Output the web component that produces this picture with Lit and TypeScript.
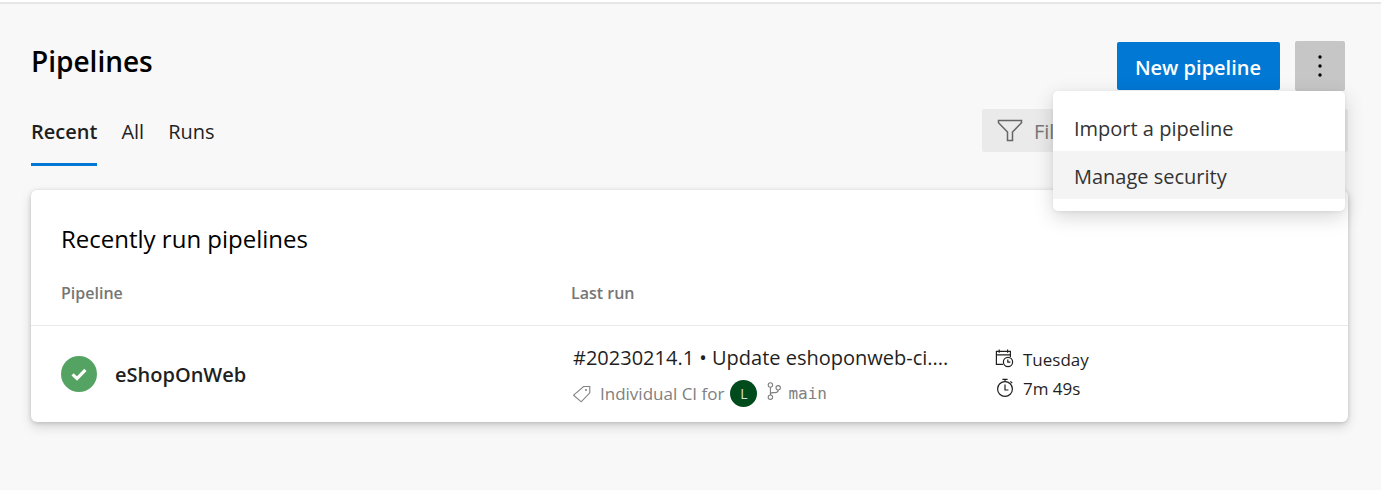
import { LitElement, html, css, svg } from "lit";
import { customElement, state } from "lit/decorators.js";

const checkIcon = html`<svg class="status" viewBox="0 0 36 36" role="img" aria-label="Success">
  <circle cx="18" cy="18" r="18" fill="#55a362" />
  <path d="M11.6 18.4l4.4 4.2 8.4-8.8" fill="none" stroke="#fff" stroke-width="3.2" />
</svg>`;

const line = (size: number, body: unknown) => html`<svg
  width=${size}
  height=${size}
  viewBox="0 0 ${size} ${size}"
  fill="none"
  stroke="currentColor"
  aria-hidden="true"
>${body}</svg>`;

const funnelIcon = line(26, svg`<path d="M1.5 2.5h23v2.2l-9 9.3v8.5h-5V14l-9-9.3z" stroke-width="1.5" />`);

const tagIcon = line(18, svg`
  <path d="M10.6 1.5h6.2v6.3l-8.6 9-7.6-6.6z" stroke-width="1.1" />
  <circle cx="13" cy="5" r="1" fill="currentColor" stroke="none" />`);

const branchIcon = line(18, svg`
  <g stroke-width="1.1">
    <circle cx="5.4" cy="3" r="2.2" />
    <circle cx="5.4" cy="15.2" r="2.2" />
    <circle cx="13.2" cy="5.8" r="2.2" />
    <path d="M5.4 5.2V13M13.2 8c0 2-1.2 2.6-3 2.6H7.6c-1.2 0-2.2.6-2.2 2.2" />
  </g>`);

const calendarIcon = line(20, svg`
  <g stroke-width="1.2">
    <path d="M8 15.4H1.4V2.4h14V8M1.4 5.8h14M4.2.4v3.4M12.6.4v3.4" />
    <circle cx="13" cy="13" r="4.6" />
    <path d="M12.8 10.4v2.8h2.6" />
  </g>`);

const timerIcon = line(20, svg`
  <g stroke-width="1.2">
    <circle cx="10" cy="11" r="7.4" />
    <path d="M10 6.6V12h3.4M7.4 1.4h5.2M10 1.4v2.2M15.4 3.4l1.8 1.8" />
  </g>`);

@customElement("app-root")
export class AppRoot extends LitElement {
  @state() private menuOpen = true;
  @state() private tab = "Recent";

  private tabs = ["Recent", "All", "Runs"];

  static styles = css`
    :host {
      display: block;
      min-height: 100vh;
      box-sizing: border-box;
      border-top: 2px solid #fff;
      background: #f8f8f8;
      color: #1f1f1f;
      font-family: "Segoe UI", "Open Sans", "Noto Sans", sans-serif;
      font-size: 20px;
      line-height: 28px;
    }
    * {
      box-sizing: border-box;
    }
    button,
    input {
      font: inherit;
      color: inherit;
      border: 0;
      margin: 0;
    }
    button {
      cursor: pointer;
    }
    a {
      color: inherit;
      text-decoration: none;
    }
    svg {
      display: block;
      flex: none;
    }
    .page {
      border-top: 2px solid #e6e6e6;
      padding: 37px 33px 68px 31px;
    }
    .header {
      display: flex;
      justify-content: space-between;
      padding-right: 3px;
    }
    h1 {
      margin: 0;
      color: #000;
      font-size: 28px;
      font-weight: 600;
      line-height: 40px;
    }
    .actions {
      display: flex;
      align-items: center;
      gap: 15px;
    }
    .primary {
      height: 48px;
      padding: 3px 19px 0 18px;
      border-radius: 2px;
      background: #0078d4;
      color: #fff;
      font-weight: 600;
    }
    .more {
      position: relative;
    }
    .dots {
      display: grid;
      place-items: center;
      width: 50px;
      height: 50px;
      padding: 0;
      border-radius: 2px;
      background: #c6c6c6;
      color: #000;
    }
    .menu {
      position: absolute;
      z-index: 1;
      top: 100%;
      right: 0;
      width: 292px;
      padding: 12px 0;
      border-radius: 5px;
      background: #fff;
      box-shadow: 0 6px 20px rgba(0, 0, 0, 0.16), 0 1px 4px rgba(0, 0, 0, 0.06);
    }
    .item {
      display: block;
      width: 100%;
      height: 48px;
      padding: 4px 21px 0;
      background: none;
      color: #333;
      text-align: left;
    }
    .item.active,
    .item:hover {
      background: #f4f4f4;
    }
    .bar {
      display: flex;
      align-items: flex-start;
      justify-content: space-between;
      margin-top: 18px;
    }
    .tabs {
      display: flex;
      gap: 24px;
    }
    .tab {
      height: 57px;
      padding: 0 0 9px;
      border-bottom: 3px solid transparent;
      background: none;
    }
    .tab.selected {
      border-color: #0078d4;
      font-weight: 600;
    }
    .filter {
      display: flex;
      align-items: center;
      gap: 11px;
      width: 366px;
      height: 43px;
      padding: 0 15px;
      border-radius: 2px;
      background: #eaeaea;
      color: #666;
    }
    .filter input {
      flex: 1;
      min-width: 0;
      padding: 2px 0 0;
      background: none;
    }
    .filter input::placeholder {
      color: #767676;
      opacity: 1;
    }
    .card {
      margin-top: 24px;
      border-radius: 6px;
      background: #fff;
      box-shadow: 0 5px 12px rgba(0, 0, 0, 0.14), 0 1px 4px rgba(0, 0, 0, 0.16);
    }
    h2 {
      margin: 0;
      padding: 32px 30px 0;
      color: #000;
      font-size: 24px;
      font-weight: 400;
      line-height: 34px;
    }
    table {
      width: 100%;
      border-collapse: collapse;
      table-layout: fixed;
    }
    .c1 {
      width: 540px;
    }
    .c2 {
      width: 424px;
    }
    th {
      height: 69px;
      padding: 6px 0 0;
      border-bottom: 1px solid #eaeaea;
      color: #767676;
      font-size: 16px;
      font-weight: 600;
      text-align: left;
    }
    td {
      height: 97px;
      padding: 0;
    }
    td.last-run {
      padding: 4px 0 0 2px;
    }
    th:first-child,
    td:first-child {
      padding-left: 30px;
    }
    .name {
      display: flex;
      align-items: center;
      gap: 18px;
      font-weight: 600;
    }
    .name span {
      padding-top: 3px;
    }
    .status {
      width: 36px;
      height: 36px;
    }
    .run {
      display: block;
      white-space: nowrap;
    }
    .detail {
      display: flex;
      align-items: center;
      margin-top: 8px;
      color: #808080;
      font-size: 17px;
    }
    .detail svg {
      margin-right: 9px;
    }
    .avatar {
      width: 27px;
      height: 27px;
      margin: 0 8px 0 6px;
      border-radius: 50%;
      background: #004b1c;
      color: #d6e4da;
      font-size: 14px;
      line-height: 27px;
      text-align: center;
    }
    .detail .branch {
      display: flex;
      align-items: center;
    }
    .detail .branch svg {
      margin: 0 5px 6px 0;
    }
    .mono {
      font-family: Consolas, "DejaVu Sans Mono", monospace;
      font-size: 16px;
    }
    .meta {
      display: flex;
      align-items: center;
      gap: 8px;
      font-size: 17px;
      line-height: 29px;
    }
  `;

  render() {
    return html`
      <main class="page">
        <header class="header">
          <h1>Pipelines</h1>
          <div class="actions">
            <button class="primary">New pipeline</button>
            <div class="more">
              <button
                class="dots"
                aria-label="More actions"
                aria-haspopup="menu"
                aria-expanded=${this.menuOpen}
                @click=${() => (this.menuOpen = !this.menuOpen)}
              >
                <svg width="6" height="24" viewBox="0 0 6 24" fill="currentColor">
                  <circle cx="3" cy="3" r="1.7" /><circle cx="3" cy="12" r="1.7" /><circle cx="3" cy="21" r="1.7" />
                </svg>
              </button>
              ${this.menuOpen
                ? html`<div class="menu" role="menu">
                    <button class="item" role="menuitem">Import a pipeline</button>
                    <button class="item active" role="menuitem">Manage security</button>
                  </div>`
                : null}
            </div>
          </div>
        </header>

        <div class="bar">
          <div class="tabs" role="tablist">
            ${this.tabs.map(
              (t) => html`<button
                class="tab ${t === this.tab ? "selected" : ""}"
                role="tab"
                aria-selected=${t === this.tab}
                @click=${() => (this.tab = t)}
              >${t}</button>`
            )}
          </div>
          <label class="filter">
            ${funnelIcon}
            <input type="text" placeholder="Filter pipelines" aria-label="Filter pipelines" />
          </label>
        </div>

        <section class="card">
          <h2>Recently run pipelines</h2>
          <table>
            <colgroup><col class="c1" /><col class="c2" /><col /></colgroup>
            <thead>
              <tr><th scope="col">Pipeline</th><th scope="col">Last run</th><th></th></tr>
            </thead>
            <tbody>
              <tr>
                <td><a class="name" href="#">${checkIcon}<span>eShopOnWeb</span></a></td>
                <td class="last-run">
                  <a class="run" href="#">#20230214.1 • Update eshoponweb-ci....</a>
                  <div class="detail">
                    ${tagIcon}<span>Individual CI for</span>
                    <span class="avatar">L</span>
                    <span class="branch">${branchIcon}<span class="mono">main</span></span>
                  </div>
                </td>
                <td>
                  <div class="meta">${calendarIcon}<span>Tuesday</span></div>
                  <div class="meta">${timerIcon}<span>7m 49s</span></div>
                </td>
              </tr>
            </tbody>
          </table>
        </section>
      </main>
    `;
  }
}
